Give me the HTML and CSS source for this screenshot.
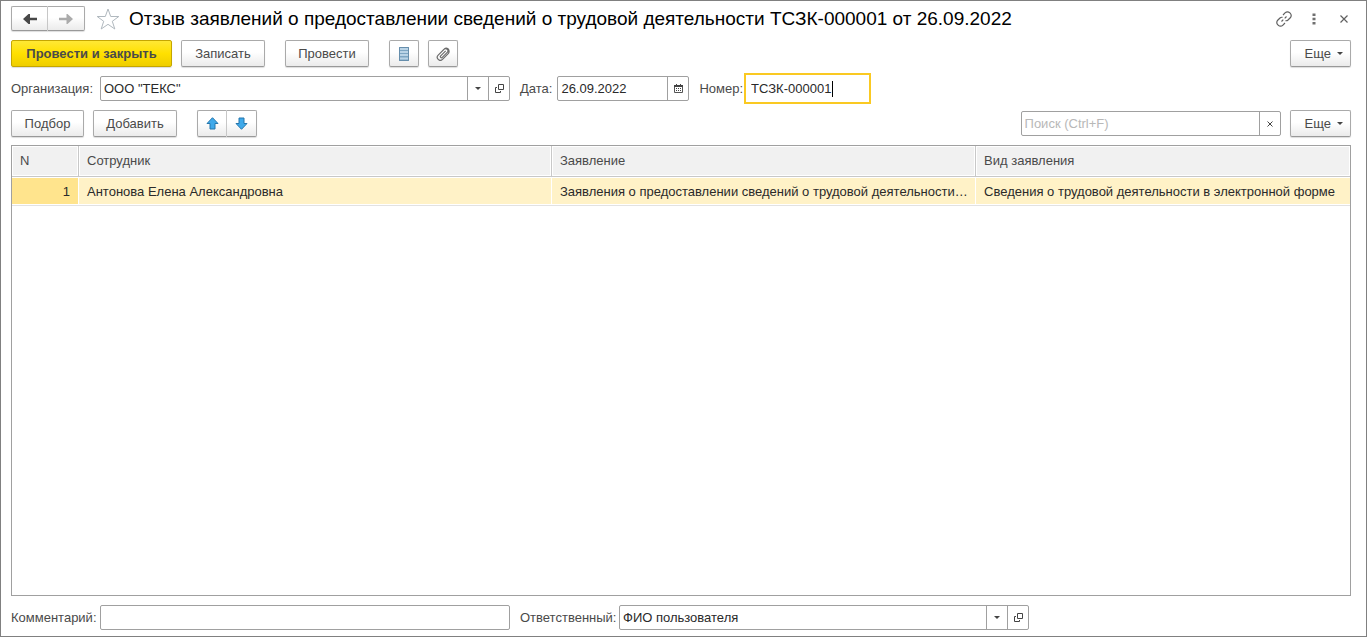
FILE: index.html
```html
<!DOCTYPE html>
<html lang="ru">
<head>
<meta charset="utf-8">
<title>Отзыв заявлений о предоставлении сведений о трудовой деятельности</title>
<link rel="stylesheet" href="styles.css">
</head>
<body>
<main class="window">
  <header class="titlebar">
    <div class="pair nav">
      <button class="btn" type="button" aria-label="Назад"><svg width="14" height="10" viewBox="0 0 14 10"><path d="M0 5L5.500 0h1.500v3.700h7v2.600H7V10H5.500z" fill="#484848"/></svg></button>
      <button class="btn" type="button" aria-label="Вперед"><svg width="14" height="10" viewBox="0 0 14 10"><path d="M14 5L8.500 0H7.500v3.800H0v2.400h7.500V10h1z" fill="#ababab"/></svg></button>
    </div>
    <button class="plain star" type="button" aria-label="В избранное"><svg width="24" height="22" viewBox="0 0 24 22"><path d="M12 1l2.700 7.500h8.100l-6.500 4.800 2.500 7.700L12 16.300 5.200 21l2.500-7.700L1.200 8.500h8.100z" fill="none" stroke="#b0b8be"/></svg></button>
    <h1 class="title">Отзыв заявлений о предоставлении сведений о трудовой деятельности ТСЗК-000001 от 26.09.2022</h1>
    <div class="tools">
      <button class="plain" type="button" aria-label="Получить ссылку"><svg width="16" height="16" viewBox="0 0 16 16"><g fill="none" stroke="#606060" stroke-width="1.200"><path d="M7 4l2.300-2.300a3 3 0 0 1 4.300 0l.7.7a3 3 0 0 1 0 4.300L12 9a2.800 2.800 0 0 1-2.500.7"/><path d="M9 12l-2.300 2.300a3 3 0 0 1-4.300 0l-.7-.7a3 3 0 0 1 0-4.300L4 7a2.800 2.800 0 0 1 2.500-.7"/><path d="M5.500 10.500L7.300 8.700M8.700 7.300l1.800-1.800"/></g></svg></button>
      <button class="plain" type="button" aria-label="Меню"><svg width="4" height="12" viewBox="0 0 4 12"><path d="M.5 0.500h3v2.500h-3zM.5 4.700h3v2.500h-3zM.5 9h3v2.500h-3z" fill="#707070"/></svg></button>
      <button class="plain" type="button" aria-label="Закрыть"><svg width="8" height="8" viewBox="0 0 8 8"><path d="M.5.5l7 7M7.500.5l-7 7" stroke="#606060" stroke-width="1.200"/></svg></button>
    </div>
  </header>

  <div class="bar commands">
    <button class="btn primary" type="button">Провести и закрыть</button>
    <button class="btn text" type="button">Записать</button>
    <button class="btn text spaced" type="button">Провести</button>
    <button class="btn icon spaced" type="button" aria-label="Движения документа"><svg width="10" height="14" viewBox="0 0 10 14"><path d="M0 0h10v14H0z" fill="#7da5c2"/><path d="M1 2h8M1 5h8M1 8h8M1 11.500h8" stroke="#b9d3e6" stroke-width="2"/><path d="M.5.5h9v13h-9z" fill="none" stroke="#668eac"/></svg></button>
    <button class="btn icon" type="button" aria-label="Присоединенные файлы"><svg width="14" height="14" viewBox="0 0 14 14"><path d="M9.700 3.800L4.700 8.800a1.100 1.100 0 0 0 1.600 1.600l5.200-5.200a2.300 2.300 0 0 0-3.200-3.200L2.200 8.100a3 3 0 0 0 4.300 4.300l5.700-5.700a3.600 3.600 0 0 0-.5-5.200 3 3 0 0 0-3.400.5" fill="none" stroke="#6c6c6c" stroke-width="1.200"/></svg></button>
    <button class="btn more" type="button">Еще<span class="caret"></span></button>
  </div>

  <div class="bar fields">
    <label class="lead" for="org">Организация:</label>
    <div class="field wide">
      <input id="org" type="text" value='ООО "ТЕКС"'>
      <button type="button" aria-label="Выбрать из списка"><span class="caret"></span></button>
      <button type="button" aria-label="Открыть организацию"><svg width="9" height="9" viewBox="0 0 9 9"><path d="M3.500.5h5v5h-5zM2 3.500H.5v5h5V7" fill="none" stroke="#444"/></svg></button>
    </div>
    <label for="date">Дата:</label>
    <div class="field date">
      <input id="date" type="text" value="26.09.2022">
      <button type="button" aria-label="Календарь"><svg width="9" height="9" viewBox="0 0 9 9"><path d="M.5 1.500h8v7h-8z" fill="#fff" stroke="#555"/><path d="M0 1h9v2H0zM2 0h1v2H2zM6 0h1v2H6z" fill="#444"/><path d="M2 4.500h5M2 6.500h5" stroke="#444" stroke-dasharray="1 1"/></svg></button>
    </div>
    <label for="num">Номер:</label>
    <div class="field number"><input id="num" type="text" value="ТСЗК-000001"><span class="cursor"></span></div>
  </div>

  <div class="bar listbar">
    <button class="btn pick" type="button">Подбор</button>
    <button class="btn text" type="button">Добавить</button>
    <div class="pair spaced">
      <button class="btn icon" type="button" aria-label="Вверх"><svg width="13" height="13" viewBox="0 0 13 13"><path d="M6.500.7l5.500 5.800H9V12H4V6.500H1z" fill="#3fa9ea" stroke="#2577ad"/></svg></button>
      <button class="btn icon" type="button" aria-label="Вниз"><svg width="13" height="13" viewBox="0 0 13 13"><path d="M6.500 12.300L1 6.500h3V1h5v5.500h3z" fill="#3fa9ea" stroke="#2577ad"/></svg></button>
    </div>
    <div class="field search">
      <input type="text" aria-label="Поиск" placeholder="Поиск (Ctrl+F)">
      <button type="button" aria-label="Очистить"><svg width="6" height="6" viewBox="0 0 6 6"><path d="M.5.5l5 5M5.500.5l-5 5" stroke="#444"/></svg></button>
    </div>
    <button class="btn more" type="button">Еще<span class="caret"></span></button>
  </div>

  <div class="list">
    <table>
      <colgroup><col class="c-num"><col class="c-person"><col class="c-doc"><col></colgroup>
      <thead><tr><th>N</th><th>Сотрудник</th><th>Заявление</th><th>Вид заявления</th></tr></thead>
      <tbody><tr><td>1</td><td>Антонова Елена Александровна</td><td>Заявления о предоставлении сведений о трудовой деятельности…</td><td>Сведения о трудовой деятельности в электронной форме</td></tr></tbody>
    </table>
  </div>

  <footer class="bar bottom">
    <label class="lead" for="comment">Комментарий:</label>
    <div class="field wide"><input id="comment" type="text"></div>
    <label class="resp" for="resp">Ответственный:</label>
    <div class="field wide">
      <input id="resp" type="text" value="ФИО пользователя">
      <button type="button" aria-label="Выбрать из списка"><span class="caret"></span></button>
      <button type="button" aria-label="Открыть пользователя"><svg width="9" height="9" viewBox="0 0 9 9"><path d="M3.500.5h5v5h-5zM2 3.500H.5v5h5V7" fill="none" stroke="#444"/></svg></button>
    </div>
  </footer>
</main>
</body>
</html>
```
FILE: styles.css
```css
* { box-sizing: border-box; }
body { margin: 0; background: #fff; }
body, button, input { font-family: "Liberation Sans", Arial, sans-serif; font-size: 13px; color: #4a4a4a; }
button, input { margin: 0; padding: 0; border: 0; background: none; }
svg { display: block; flex: none; }

.window {
  display: flex;
  flex-direction: column;
  min-height: 100vh;
  padding: 5px 15px 6px 10px;
  border: 1px solid #808080;
}

.btn, .plain, .field button { display: flex; align-items: center; justify-content: center; }
.btn {
  height: 27px;
  padding: 0 12px;
  border: 1px solid #aaa;
  border-bottom-color: #999;
  border-radius: 2px;
  background: linear-gradient(#fff 45%, #ebebeb);
  box-shadow: 0 1px 1px #ddd;
  white-space: nowrap;
}
.text { min-width: 84px; }
.pick { min-width: 73px; }
.primary {
  min-width: 161px;
  border-color: #c5a600;
  background: linear-gradient(#ffe835, #ffe000 50%, #efce00);
  font-weight: bold;
}
.icon { width: 30px; padding: 0; }
.more { gap: 6px; padding: 0 7px 0 14px; }
.commands .more { margin-left: auto; }
.spaced { margin-left: 11px; }
.pair { display: flex; }
.pair .btn + .btn { border-left: 0; border-radius: 0 2px 2px 0; }
.pair .btn:first-child { border-radius: 2px 0 0 2px; border-right-color: #c5c5c5; }
.nav .btn { width: 37px; height: 25px; padding: 0; }

.titlebar { display: flex; align-items: center; height: 25px; }
.star { margin: 0 9px 0 11px; }
.title { margin: 0; font-size: 19px; line-height: 24px; font-weight: normal; color: #000; white-space: nowrap; }
.tools { display: flex; align-items: center; margin: 0 -8px 0 auto; }
.tools .plain { width: 30px; }

.bar { display: flex; align-items: center; gap: 9px; }
.commands { margin-top: 9px; }
.fields { height: 31px; margin: 6px 0; gap: 10px; }
.fields label, .bottom label { white-space: nowrap; }
.lead { width: 79px; }
.fields label[for="date"] { margin-right: -5px; }

.field {
  display: flex;
  height: 25px;
  border: 1px solid #a0a0a0;
  border-radius: 2px;
  background: #fff;
}
.field input { flex: 1; min-width: 0; padding: 0 3px; color: #2a2a2a; outline: 0; }
.field input::placeholder { color: #b8b8b8; opacity: 1; }
.field button { width: 21px; border-left: 1px solid #a0a0a0; }
.wide { width: 410px; }
.date { width: 132px; }
.search { width: 260px; margin-left: auto; }
.number { position: relative; width: 127px; height: 31px; margin-left: -9px; border: 2px solid #fac922; border-radius: 0; }
.number input { padding: 0 5px; }
.cursor { position: absolute; left: 86px; top: 6px; width: 1px; height: 16px; background: #000; }
.caret { border: 3px solid transparent; border-top-color: #444; border-bottom: 0; }

.list { flex: 1; margin: 8px 0 9px; border: 1px solid #a0a0a0; }
table { width: 100%; border-collapse: separate; border-spacing: 0; table-layout: fixed; }
.c-num { width: 67px; }
.c-person { width: 35.35%; }
.c-doc { width: 31.7%; }
th, td { overflow: hidden; padding: 0 4px 0 8px; text-align: left; text-overflow: ellipsis; white-space: nowrap; }
th {
  height: 31px;
  padding-bottom: 1px;
  border-right: 1px solid #c8c8c8;
  border-bottom: 1px solid #c8c8c8;
  background: #f1f1f1;
  box-shadow: inset 0 0 0 1px #fff;
  font-weight: normal;
}
td {
  height: 28px;
  border: solid #fff;
  border-width: 1px 1px 1px 0;
  background: #fff2c7;
  box-shadow: 0 1px #e2e2e2;
  color: #2a2a2a;
}
td:first-child { padding-right: 8px; background: #ffe48d; text-align: right; }
th:last-child, td:last-child { border-right: 0; }
.bottom { gap: 10px; }
.resp { width: 89px; }
```
